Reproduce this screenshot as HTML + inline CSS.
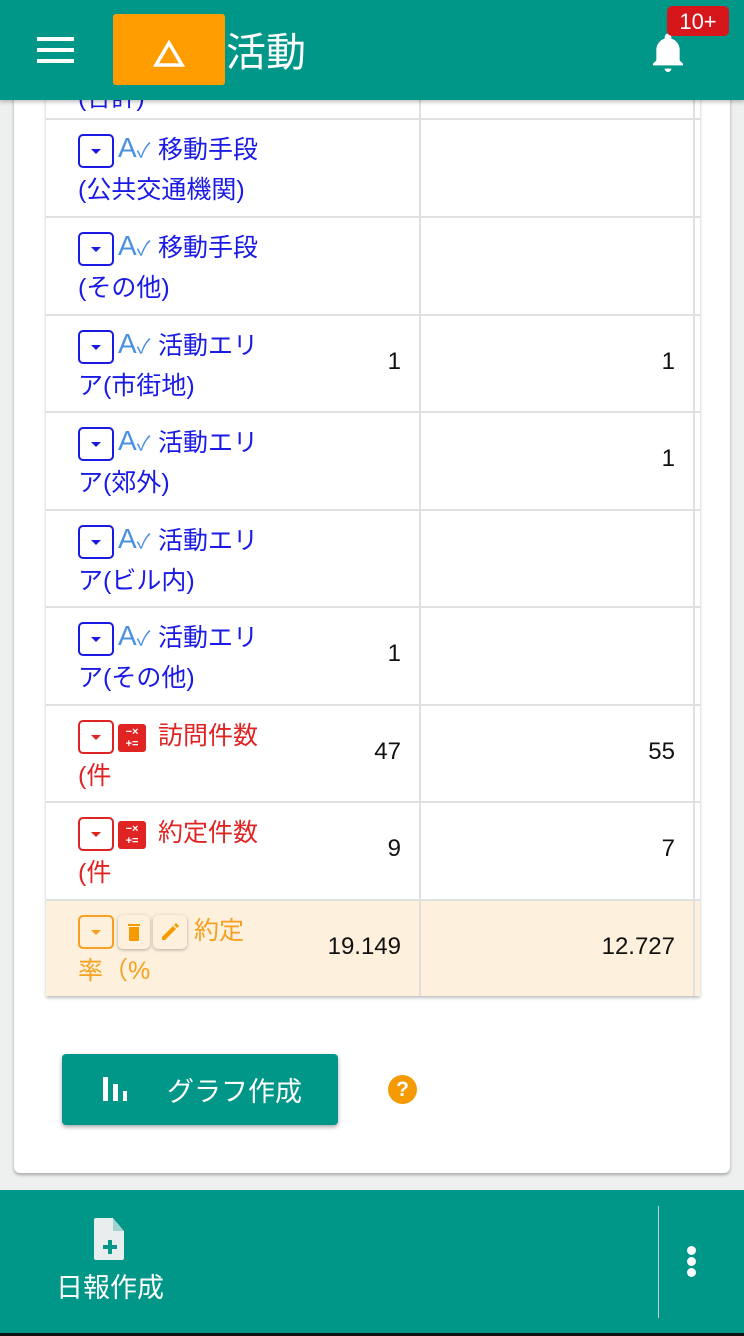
<!DOCTYPE html>
<html><head><meta charset="utf-8"><style>
*{margin:0;padding:0;box-sizing:border-box}
body{width:744px;height:1336px;background:#eef0f0;position:relative;overflow:hidden;font-family:"Liberation Sans","Noto Sans CJK JP",sans-serif}
.card{position:absolute;left:14px;top:80px;width:716px;height:1093px;background:#fff;border-radius:6px;box-shadow:0 2px 3px rgba(0,0,0,.3)}
.tbl{position:absolute;left:46px;top:80px;width:654px;height:916px;box-shadow:0 2px 3px rgba(0,0,0,.25);background:#fff}
.row{position:absolute;left:46px;width:654px;height:98px;border-top:2px solid #e0e0e0;}
.c1{position:absolute;left:0;top:0;width:375px;height:100%;border-right:2px solid #e0e0e0}
.c2{position:absolute;left:375px;top:0;width:274px;height:100%;border-right:2px solid #e0e0e0}
.lbl{position:absolute;left:32px;top:10px;font-size:25px;line-height:40px;color:#1a1ae6;width:220px}
.lbl .t{margin-left:80px}
.box{position:absolute;left:32px;top:14px;width:36px;height:34px;border:2px solid #1a1ae6;border-radius:5px}
.box:after{content:"";position:absolute;left:11px;top:13px;border-left:5px solid transparent;border-right:5px solid transparent;border-top:5px solid currentColor}
.ic{position:absolute;left:72px;top:12px;font-size:28px;color:#4a90e2}
.num{position:absolute;right:18px;top:32px;font-size:24px;color:#111}
.red .lbl,.red .box{color:#e02424;border-color:#e02424}
.calc{position:absolute;left:72px;top:18px;width:28px;height:28px;background:#e02424;border-radius:3px;color:#fff;font-size:11px;line-height:12px;text-align:center;font-weight:bold;padding-top:2px}
</style></head><body>
<div class="card"></div>
<div class="tbl"></div>
<div class="row" style="top:20px;height:98px;border-top:none"><div class="c1"><div class="lbl" style="top:58px">(合計)</div></div><div class="c2"></div></div>

<div class="row" style="top:118px"><div class="c1"><div class="box" style="color:#1a1ae6"></div><div class="ic">A<span style="font-size:20px">✓</span></div><div class="lbl"><span class="t">移動手段</span><br>(公共交通機関)</div></div><div class="c2"></div></div>
<div class="row" style="top:216px"><div class="c1"><div class="box" style="color:#1a1ae6"></div><div class="ic">A<span style="font-size:20px">✓</span></div><div class="lbl"><span class="t">移動手段</span><br>(その他)</div></div><div class="c2"></div></div>
<div class="row" style="top:314px"><div class="c1"><div class="box" style="color:#1a1ae6"></div><div class="ic">A<span style="font-size:20px">✓</span></div><div class="lbl"><span class="t">活動エリ</span><br>ア(市街地)</div><div class="num">1</div></div><div class="c2"><div class="num">1</div></div></div>
<div class="row" style="top:411px"><div class="c1"><div class="box" style="color:#1a1ae6"></div><div class="ic">A<span style="font-size:20px">✓</span></div><div class="lbl"><span class="t">活動エリ</span><br>ア(郊外)</div></div><div class="c2"><div class="num">1</div></div></div>
<div class="row" style="top:509px"><div class="c1"><div class="box" style="color:#1a1ae6"></div><div class="ic">A<span style="font-size:20px">✓</span></div><div class="lbl"><span class="t">活動エリ</span><br>ア(ビル内)</div></div><div class="c2"></div></div>
<div class="row" style="top:606px"><div class="c1"><div class="box" style="color:#1a1ae6"></div><div class="ic">A<span style="font-size:20px">✓</span></div><div class="lbl"><span class="t">活動エリ</span><br>ア(その他)</div><div class="num">1</div></div><div class="c2"></div></div>
<div class="row red" style="top:704px"><div class="c1"><div class="box" style="color:#e02424"></div><div class="calc">−×<br>+=</div><div class="lbl"><span class="t">訪問件数</span><br>(件</div><div class="num">47</div></div><div class="c2"><div class="num">55</div></div></div>
<div class="row red" style="top:801px"><div class="c1"><div class="box" style="color:#e02424"></div><div class="calc">−×<br>+=</div><div class="lbl"><span class="t">約定件数</span><br>(件</div><div class="num">9</div></div><div class="c2"><div class="num">7</div></div></div>
<div class="row" style="top:899px;height:97px;background:#fdf0dc"><div class="c1"><div class="box" style="color:#f5a020;border-color:#f5a020"></div>
<div style="position:absolute;left:72px;top:14px;width:32px;height:34px;background:#fdf0dc;border-radius:5px;box-shadow:0 1px 3px rgba(0,0,0,.3)"><svg width="32" height="34" viewBox="0 0 32 34"><path d="M11 12h10v13a1 1 0 0 1-1 1h-8a1 1 0 0 1-1-1z M10 9h12v2H10z" fill="#f59a00"/></svg></div>
<div style="position:absolute;left:107px;top:14px;width:34px;height:34px;background:#fdf0dc;border-radius:5px;box-shadow:0 1px 3px rgba(0,0,0,.3)"><svg width="34" height="34" viewBox="0 0 34 34"><path d="M9 22l11-11 3 3-11 11H9z M21 10l2-2 3 3-2 2z" fill="#f59a00"/></svg></div>
<div class="lbl" style="color:#f5a020"><span style="margin-left:116px">約定</span><br>率（%</div><div class="num">19.149</div></div><div class="c2"><div class="num">12.727</div></div></div>

<div style="position:absolute;left:62px;top:1054px;width:276px;height:71px;background:#009688;border-radius:4px;box-shadow:0 2px 4px rgba(0,0,0,.35);color:#fff;font-size:27px">
<div style="position:absolute;left:41px;top:23px;width:5px;height:24px;background:#fff"></div>
<div style="position:absolute;left:51px;top:30px;width:5px;height:17px;background:#fff"></div>
<div style="position:absolute;left:61px;top:37px;width:4px;height:10px;background:#fff"></div>
<div style="position:absolute;left:105px;top:16px">グラフ作成</div></div>
<div style="position:absolute;left:388px;top:1075px;width:29px;height:29px;border-radius:50%;background:#f59a00;color:#fff;font-weight:bold;font-size:21px;text-align:center;line-height:29px">?</div>

<div style="position:absolute;left:0;top:0;width:744px;height:100px;background:#009688;box-shadow:0 2px 4px rgba(0,0,0,.25)">
<div style="position:absolute;left:37px;top:37px;width:37px;height:4px;background:#fff;box-shadow:0 11px 0 #fff,0 22px 0 #fff"></div>
<div style="position:absolute;left:113px;top:14px;width:112px;height:71px;background:#ff9d00;border-radius:3px"><svg width="112" height="71"><path d="M56 29L69 51H43z" fill="none" stroke="#fff" stroke-width="3.5"/></svg></div>
<div style="position:absolute;left:226px;top:20px;font-size:40px;color:#fff">活動</div>
<svg style="position:absolute;left:648px;top:30px" width="40" height="44" viewBox="0 0 24 26"><path d="M12 2a2 2 0 0 1 2 2v1a7 7 0 0 1 5 7v6l2 2v1H3v-1l2-2v-6a7 7 0 0 1 5-7V4a2 2 0 0 1 2-2z M10 23h4a2 2 0 0 1-4 0z" fill="#fff"/></svg>
<div style="position:absolute;left:667px;top:6px;width:62px;height:30px;background:#d6161b;border-radius:5px;color:#fff;font-size:22px;text-align:center;line-height:32px">10+</div>
</div>

<div style="position:absolute;left:0;top:1190px;width:744px;height:143px;background:#009688">
<svg style="position:absolute;left:93px;top:28px" width="34" height="42" viewBox="0 0 34 42"><path d="M3 0h17l11 13v27a2 2 0 0 1-2 2H3a2 2 0 0 1-2-2V2a2 2 0 0 1 2-2z" fill="#e8eeee"/><path d="M20 0v13h11z" fill="#009688" opacity=".3"/><path d="M15 22h4v5h5v4h-5v5h-4v-5h-5v-4h5z" fill="#009688"/></svg>
<div style="position:absolute;left:56px;top:76px;font-size:27px;color:#fff">日報作成</div>
<div style="position:absolute;left:658px;top:16px;width:1px;height:112px;background:#ccc"></div>
<div style="position:absolute;left:687px;top:56px;width:9px;height:9px;border-radius:50%;background:#fff;box-shadow:0 11px 0 #fff,0 22px 0 #fff"></div>
</div>
<div style="position:absolute;left:0;top:1333px;width:744px;height:3px;background:#111"></div>
</body></html>
